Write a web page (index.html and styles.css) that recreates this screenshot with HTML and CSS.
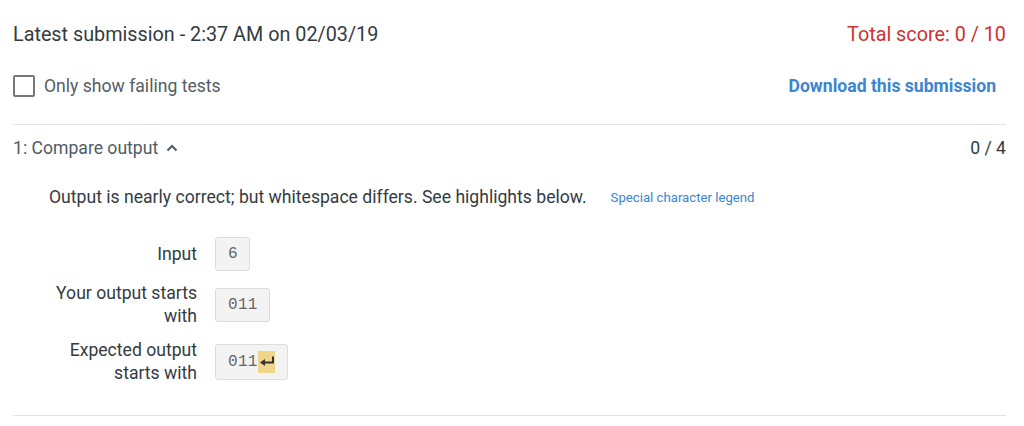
FILE: index.html
```html
<!DOCTYPE html>
<html>
<head>
<meta charset="utf-8">
<link rel="stylesheet" href="styles.css">
</head>
<body>
<div class="page">
  <div class="header">
    <div class="title">Latest submission - 2:37 AM on 02/03/19</div>
    <div class="total">Total score: 0 / 10</div>
  </div>
  <div class="controls">
    <label class="check"><span class="box"></span><span>Only show failing tests</span></label>
    <a class="download">Download this submission</a>
  </div>
  <div class="test">
    <div class="test-head">
      <div class="test-name">1: Compare output
        <svg class="chev" width="12" height="8" viewBox="0 0 12 8"><path d="M1.5 6.5 L6 2 L10.5 6.5" fill="none" stroke="#4f5b66" stroke-width="2"/></svg>
      </div>
      <div class="test-score">0 / 4</div>
    </div>
    <div class="test-body">
      <div class="msg"><span>Output is nearly correct; but whitespace differs. See highlights below.</span><a class="legend">Special character legend</a></div>
      <div class="grid">
        <div class="lbl">Input</div>
        <div><span class="code">6</span></div>
        <div class="lbl">Your output starts with</div>
        <div><span class="code">011</span></div>
        <div class="lbl">Expected output starts with</div>
        <div><span class="code">011<span class="hl"><svg width="17" height="22" viewBox="0 0 17 22"><path d="M15 5.5 V11.5 H5" fill="none" stroke="#333" stroke-width="2"/><path d="M2 11.5 L7 8 L7 15 Z" fill="#333"/></svg></span></span></div>
      </div>
    </div>
  </div>
</div>
</body>
</html>
```

FILE: styles.css
```css
* { box-sizing: border-box; }
body {
  margin: 0;
  font-family: Roboto, "Liberation Sans", sans-serif;
  background: #fff;
  color: #333;
}
.page {
  padding: 0 18px 0 13px;
}
.header {
  display: flex;
  justify-content: space-between;
  align-items: center;
  padding-top: 23px;
  height: 47px;
}
.title {
  font-size: 19.8px;
  line-height: 26px;
  color: #333b42;
}
.total {
  font-size: 19.8px;
  line-height: 26px;
  color: #cc3333;
}
.controls {
  display: flex;
  justify-content: space-between;
  align-items: center;
  height: 78px;
  border-bottom: 1px solid #e3e3e3;
}
.check {
  display: flex;
  align-items: center;
  gap: 9px;
  font-size: 17.6px;
  color: #555c63;
  margin-top: 1px;
}
.box {
  width: 22px;
  height: 22px;
  border: 2px solid #777;
  border-radius: 2px;
  display: inline-block;
}
.download {
  font-size: 17.6px;
  font-weight: 700;
  color: #3a86d0;
  margin-right: 10px;
  margin-top: 1px;
}
.test {
  border-bottom: 1px solid #e3e3e3;
  padding-bottom: 30px;
}
.test-head {
  display: flex;
  justify-content: space-between;
  align-items: center;
  height: 45px;
  font-size: 17.6px;
}
.test-name {
  color: #4f5b66;
  display: flex;
  align-items: center;
  gap: 8px;
}
.test-score {
  color: #333b42;
}
.test-body {
  padding-left: 34px;
}
.msg {
  display: flex;
  align-items: center;
  font-size: 17.6px;
  color: #333b42;
  height: 28px;
  margin-top: 13px;
  padding-left: 2px;
}
.legend {
  font-size: 13.2px;
  color: #3a86d0;
  margin-left: 24px;
}
.grid {
  display: grid;
  grid-template-columns: 150px auto;
  column-gap: 18px;
  row-gap: 11px;
  margin-top: 26px;
  align-items: center;
}
.lbl {
  text-align: right;
  font-size: 17.6px;
  line-height: 23px;
  color: #333b42;
}
.code {
  display: inline-flex;
  align-items: center;
  font-family: "Liberation Mono", monospace;
  font-size: 16px;
  line-height: 20px;
  letter-spacing: 0.3px;
  color: #666;
  background: #f3f3f3;
  border: 1px solid #dcdcdc;
  border-radius: 3px;
  padding: 6px 11px 6px 12px;
}
.hl {
  display: inline-block;
  background: #f0d68a;
  height: 22px;
  width: 17px;
  margin-right: 1px;
}
.hl svg { display: block; }
```
